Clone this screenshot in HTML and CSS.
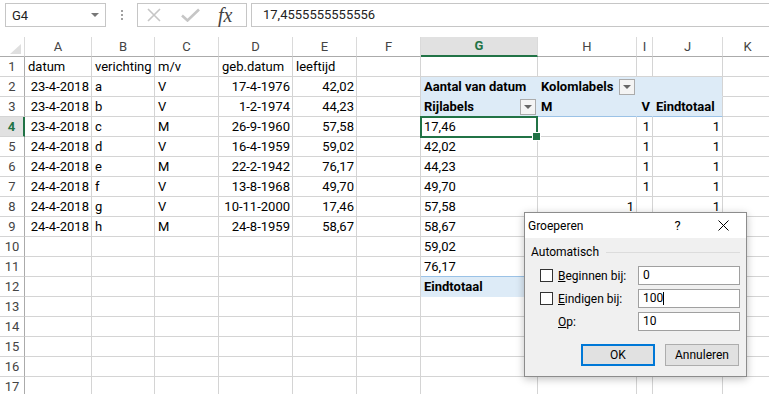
FILE: index.html
```html
<!DOCTYPE html>
<html lang="nl">
<head>
    <meta charset="UTF-8">
    <meta name="viewport" content="width=device-width, initial-scale=1.0">
    <title>Groeperen - draaitabel</title>
    <link rel="stylesheet" href="styles.css">
</head>
<body>

    <!-- Formula bar -->
    <div class="formula-bar">
        <div class="name-box">
            <span>G4</span>
            <span class="name-arrow"></span>
        </div>
        <div class="bar-dots"><span></span><span></span><span></span></div>
        <div class="fx-box">
            <svg class="fx-icon" width="14" height="14" viewBox="0 0 14 14">
                <path d="M1 1 L13 13 M13 1 L1 13" stroke="#c6c6c6" stroke-width="1.6" fill="none"/>
            </svg>
            <svg class="fx-icon" width="19" height="14" viewBox="0 0 19 14">
                <path d="M1 7.5 L6.5 12.5 L18 1.5" stroke="#c6c6c6" stroke-width="2.6" fill="none"/>
            </svg>
            <span class="fx-text">fx</span>
        </div>
        <div class="formula-input">17,4555555555556</div>
    </div>

    <!-- Sheet -->
    <table class="sheet">
        <colgroup>
            <col class="c-rh">
            <col class="c-a"><col class="c-b"><col class="c-c"><col class="c-d"><col class="c-e">
            <col class="c-f"><col class="c-g"><col class="c-h"><col class="c-i"><col class="c-j"><col class="c-k">
        </colgroup>
        <tr class="col-heads">
            <th class="corner"><span class="corner-tri"></span></th>
            <th>A</th><th>B</th><th>C</th><th>D</th><th>E</th><th>F</th>
            <th class="active">G</th><th>H</th><th>I</th><th>J</th><th>K</th>
        </tr>
        <tr>
            <th class="rh">1</th>
            <td>datum</td><td>verichting</td><td>m/v</td><td>geb.datum</td><td>leeftijd</td>
            <td></td><td></td><td></td><td></td><td></td><td></td>
        </tr>
        <tr>
            <th class="rh">2</th>
            <td class="r">23-4-2018</td><td>a</td><td>V</td><td class="r">17-4-1976</td><td class="r">42,02</td>
            <td></td>
            <td class="pv b">Aantal van datum</td>
            <td class="pv b dd-cell"><span class="dd"></span>Kolomlabels</td>
            <td class="pv"></td><td class="pv pv-last"></td><td></td>
        </tr>
        <tr>
            <th class="rh">3</th>
            <td class="r">23-4-2018</td><td>b</td><td>V</td><td class="r">1-2-1974</td><td class="r">44,23</td>
            <td></td>
            <td class="pv pv-bottom b dd-cell"><span class="dd"></span>Rijlabels</td>
            <td class="pv pv-bottom b">M</td>
            <td class="pv pv-bottom b r">V</td>
            <td class="pv pv-bottom pv-last b">Eindtotaal</td><td></td>
        </tr>
        <tr>
            <th class="rh active">4</th>
            <td class="r">23-4-2018</td><td>c</td><td>M</td><td class="r">26-9-1960</td><td class="r">57,58</td>
            <td></td>
            <td class="sel">17,46</td><td></td><td class="r">1</td><td class="r">1</td><td></td>
        </tr>
        <tr>
            <th class="rh">5</th>
            <td class="r">24-4-2018</td><td>d</td><td>V</td><td class="r">16-4-1959</td><td class="r">59,02</td>
            <td></td>
            <td>42,02</td><td></td><td class="r">1</td><td class="r">1</td><td></td>
        </tr>
        <tr>
            <th class="rh">6</th>
            <td class="r">24-4-2018</td><td>e</td><td>M</td><td class="r">22-2-1942</td><td class="r">76,17</td>
            <td></td>
            <td>44,23</td><td></td><td class="r">1</td><td class="r">1</td><td></td>
        </tr>
        <tr>
            <th class="rh">7</th>
            <td class="r">24-4-2018</td><td>f</td><td>V</td><td class="r">13-8-1968</td><td class="r">49,70</td>
            <td></td>
            <td>49,70</td><td></td><td class="r">1</td><td class="r">1</td><td></td>
        </tr>
        <tr>
            <th class="rh">8</th>
            <td class="r">24-4-2018</td><td>g</td><td>V</td><td class="r">10-11-2000</td><td class="r">17,46</td>
            <td></td>
            <td>57,58</td><td class="r">1</td><td></td><td class="r">1</td><td></td>
        </tr>
        <tr>
            <th class="rh">9</th>
            <td class="r">24-4-2018</td><td>h</td><td>M</td><td class="r">24-8-1959</td><td class="r">58,67</td>
            <td></td>
            <td>58,67</td><td></td><td></td><td></td><td></td>
        </tr>
        <tr>
            <th class="rh">10</th>
            <td></td><td></td><td></td><td></td><td></td><td></td>
            <td>59,02</td><td></td><td></td><td></td><td></td>
        </tr>
        <tr>
            <th class="rh">11</th>
            <td></td><td></td><td></td><td></td><td></td><td></td>
            <td class="pv-above">76,17</td><td class="pv-above"></td><td class="pv-above"></td><td class="pv-above"></td><td></td>
        </tr>
        <tr>
            <th class="rh">12</th>
            <td></td><td></td><td></td><td></td><td></td><td></td>
            <td class="pv b">Eindtotaal</td><td class="pv"></td><td class="pv"></td><td class="pv pv-last"></td><td></td>
        </tr>
        <tr><th class="rh">13</th><td></td><td></td><td></td><td></td><td></td><td></td><td></td><td></td><td></td><td></td><td></td></tr>
        <tr><th class="rh">14</th><td></td><td></td><td></td><td></td><td></td><td></td><td></td><td></td><td></td><td></td><td></td></tr>
        <tr><th class="rh">15</th><td></td><td></td><td></td><td></td><td></td><td></td><td></td><td></td><td></td><td></td><td></td></tr>
        <tr><th class="rh">16</th><td></td><td></td><td></td><td></td><td></td><td></td><td></td><td></td><td></td><td></td><td></td></tr>
        <tr><th class="rh">17</th><td></td><td></td><td></td><td></td><td></td><td></td><td></td><td></td><td></td><td></td><td></td></tr>
    </table>

    <!-- Groeperen dialog -->
    <div class="dialog">
        <div class="dialog-title">
            <span class="dialog-name">Groeperen</span>
            <span class="dialog-help">?</span>
            <span class="dialog-close">
                <svg width="11" height="11" viewBox="0 0 11 11">
                    <path d="M0.5 0.5 L10.5 10.5 M10.5 0.5 L0.5 10.5" stroke="#000" stroke-width="1" fill="none"/>
                </svg>
            </span>
        </div>
        <div class="dialog-body">
            <div class="group-head">
                <span>Automatisch</span>
                <span class="group-line"></span>
            </div>
            <div class="field">
                <span class="check"></span>
                <label><u>B</u>eginnen bij:</label>
                <div class="text-box">0</div>
            </div>
            <div class="field">
                <span class="check"></span>
                <label><u>E</u>indigen bij:</label>
                <div class="text-box">100<span class="caret"></span></div>
            </div>
            <div class="field">
                <span class="check-space"></span>
                <label><u>O</u>p:</label>
                <div class="text-box">10</div>
            </div>
            <div class="dialog-buttons">
                <div class="btn btn-default">OK</div>
                <div class="btn">Annuleren</div>
            </div>
        </div>
    </div>

</body>
</html>
```

FILE: styles.css
```css
/* Basic reset */
* {
    margin: 0;
    padding: 0;
    box-sizing: border-box;
}

body {
    font-family: Roboto, "Liberation Sans", sans-serif;
    font-size: 13px;
    color: #000;
    background-color: #fff;
    width: 769px;
    height: 394px;
    overflow: hidden;
    position: relative;
}

/* Formula bar */
.formula-bar {
    display: flex;
    height: 24px;
    margin: 3px 0 10px 5px;
}

.name-box {
    width: 101px;
    border: 1px solid #c6c6c6;
    display: flex;
    align-items: center;
    justify-content: space-between;
    padding: 0 6px 0 6px;
    color: #222;
}

.name-arrow {
    width: 0;
    height: 0;
    border-left: 4px solid transparent;
    border-right: 4px solid transparent;
    border-top: 4px solid #777;
}

.bar-dots {
    width: 31px;
    display: flex;
    flex-direction: column;
    align-items: center;
    justify-content: center;
    gap: 2px;
}

.bar-dots span {
    width: 2px;
    height: 2px;
    background-color: #a0a0a0;
}

.fx-box {
    width: 110px;
    border: 1px solid #c6c6c6;
    display: flex;
    align-items: center;
    padding-left: 9px;
}

.fx-icon {
    margin-right: 20px;
}

.fx-text {
    font-family: "Liberation Serif", serif;
    font-style: italic;
    font-size: 20px;
    color: #444;
    margin-left: -2px;
    line-height: 20px;
}

.formula-input {
    flex: 1;
    margin-left: 4px;
    border: 1px solid #c6c6c6;
    border-right: none;
    padding-left: 11px;
    line-height: 22px;
    color: #222;
}

/* Sheet grid */
.sheet {
    border-spacing: 0;
    table-layout: fixed;
    width: 773px;
}

.sheet tr {
    height: 20px;
}

.c-rh { width: 25px; }
.c-a { width: 67px; }
.c-b { width: 63px; }
.c-c { width: 64px; }
.c-d { width: 74px; }
.c-e { width: 64px; }
.c-f { width: 64px; }
.c-g { width: 117px; }
.c-h { width: 99px; }
.c-i { width: 16px; }
.c-j { width: 70px; }
.c-k { width: 50px; }

.sheet td {
    padding: 0 2px 0 3px;
    line-height: 19px;
    border-right: 1px solid #d4d4d4;
    border-bottom: 1px solid #d4d4d4;
    white-space: nowrap;
    overflow: hidden;
    text-align: left;
    font-weight: normal;
}

.sheet th {
    font-weight: normal;
    color: #444;
    line-height: 19px;
    text-align: center;
}

.col-heads th {
    border-right: 1px solid #dadada;
    border-bottom: 1px solid #ababab;
}

.col-heads th.active {
    background-color: #e1e1e1;
    color: #217346;
    font-weight: bold;
    line-height: 18px;
    border-bottom: 2px solid #217346;
}

.corner {
    position: relative;
}

.corner-tri {
    position: absolute;
    right: 3px;
    bottom: 2px;
    width: 0;
    height: 0;
    border-left: 11px solid transparent;
    border-bottom: 10px solid #dfdfdf;
}

.sheet th.rh {
    border-right: 1px solid #ababab;
    border-bottom: 1px solid #d4d4d4;
}

.sheet th.rh.active {
    background-color: #e1e1e1;
    color: #217346;
    font-weight: bold;
    border-right: 2px solid #217346;
}

.sheet td.r {
    text-align: right;
}

.sheet td.b {
    font-weight: bold;
}

/* Pivot table */
.sheet td.pv {
    background-color: #ddebf7;
    border-right-color: #ddebf7;
    border-bottom-color: #ddebf7;
}

.sheet td.pv-last {
    border-right-color: #d4d4d4;
}

.sheet td.pv-bottom,
.sheet td.pv-above {
    border-bottom-color: #9bc2e6;
}

.sheet td.dd-cell {
    padding-right: 1px;
}

.dd {
    float: right;
    width: 16px;
    height: 16px;
    margin-top: 2px;
    border: 1px solid #ababab;
    background-color: #f4f4f4;
    position: relative;
}

.dd::after {
    content: "";
    position: absolute;
    left: 3px;
    top: 5px;
    border-left: 4px solid transparent;
    border-right: 4px solid transparent;
    border-top: 4px solid #666;
}

/* Active cell */
.sheet td.sel {
    position: relative;
    overflow: visible;
}

.sel::after {
    content: "";
    position: absolute;
    top: -1px;
    left: -1px;
    right: -1px;
    bottom: -2px;
    border: 2px solid #217346;
    z-index: 2;
}

.sel::before {
    content: "";
    position: absolute;
    right: -4px;
    bottom: -5px;
    width: 7px;
    height: 7px;
    background-color: #217346;
    border: 1px solid #fff;
    z-index: 3;
}

/* Dialog */
.dialog {
    position: absolute;
    top: 212px;
    left: 524px;
    width: 223px;
    height: 165px;
    border: 1px solid #8c8c8c;
    background-color: #f0f0f0;
    box-shadow: 0 2px 8px rgba(0, 0, 0, 0.25);
    font-size: 12px;
    z-index: 10;
}

.dialog-title {
    height: 25px;
    background-color: #fff;
    display: flex;
    align-items: center;
}

.dialog-name {
    flex: 1;
    padding-left: 3px;
}

.dialog-help {
    width: 45px;
    text-align: center;
    font-size: 13px;
}

.dialog-close {
    width: 46px;
    display: flex;
    justify-content: center;
}

.dialog-body {
    padding: 7px 6px 0 0;
}

.group-head {
    display: flex;
    align-items: center;
    height: 14px;
    padding-left: 6px;
    margin-bottom: 7px;
}

.group-line {
    flex: 1;
    margin-left: 7px;
    border-top: 1px solid #dcdcdc;
}

.field {
    display: flex;
    align-items: center;
    height: 19px;
    margin-bottom: 4px;
    padding-left: 15px;
}

.check {
    width: 13px;
    height: 13px;
    border: 1px solid #333;
    background-color: #fff;
    margin-right: 5px;
}

.check-space {
    width: 18px;
}

.field label {
    flex: 1;
}

.text-box {
    width: 102px;
    height: 19px;
    border: 1px solid #a0a0a0;
    background-color: #fff;
    padding-left: 4px;
    line-height: 17px;
    display: flex;
    align-items: center;
}

.caret {
    width: 1px;
    height: 13px;
    background-color: #000;
}

.dialog-buttons {
    display: flex;
    justify-content: flex-end;
    gap: 10px;
    margin-top: 13px;
    padding-right: 1px;
}

.btn {
    width: 74px;
    height: 22px;
    border: 1px solid #adadad;
    background-color: #e1e1e1;
    display: flex;
    align-items: center;
    justify-content: center;
}

.btn-default {
    border: 2px solid #0078d7;
}
```
